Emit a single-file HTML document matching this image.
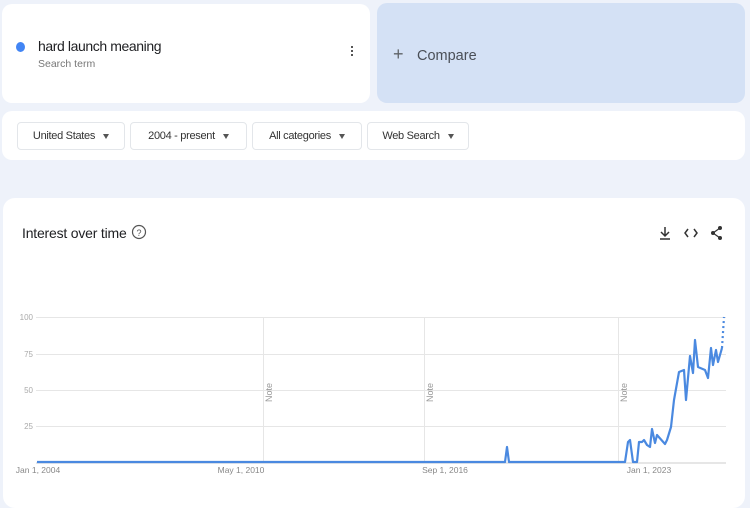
<!DOCTYPE html>
<html><head><style>
body{margin:0;width:750px;height:500px;overflow:hidden;background:#eef2fa;font-family:"Liberation Sans",sans-serif;position:relative}
.card{position:absolute;background:#fff;border-radius:10px}
.dd{position:absolute;top:122px;height:26px;border:1px solid #e3e6ea;border-radius:4px;background:#fff;font-size:11px;color:#333;display:flex;align-items:center;justify-content:center;gap:8px;letter-spacing:-0.3px}
.dd:after{content:"";border-left:3.5px solid transparent;border-right:3.5px solid transparent;border-top:5px solid #555}
</style></head><body>
<div class="card" style="left:2px;top:4px;width:368px;height:99px"></div>
<div style="position:absolute;left:16px;top:42px;width:9px;height:10px;border-radius:50%;background:#4285f4"></div>
<div style="position:absolute;left:38px;top:38px;font-size:14px;color:#202124;letter-spacing:-0.4px">hard launch meaning</div>
<div style="position:absolute;left:38px;top:58px;font-size:10.5px;color:#777">Search term</div>
<div style="position:absolute;left:351px;top:46px;width:2px;height:2px;background:#555;box-shadow:0 4px #555,0 8px #555"></div>
<div class="card" style="left:377px;top:3px;width:368px;height:100px;background:#d4e1f5"></div>
<div style="position:absolute;left:393px;top:44px;font-size:18px;color:#5f6368">+</div>
<div style="position:absolute;left:417px;top:48px;font-size:14.5px;color:#4a4f57">Compare</div>
<div class="card" style="left:2px;top:111px;width:743px;height:49px"></div>
<div class="dd" style="left:17px;width:106px">United States</div>
<div class="dd" style="left:130px;width:115px">2004 - present</div>
<div class="dd" style="left:252px;width:108px">All categories</div>
<div class="dd" style="left:367px;width:100px">Web Search</div>
<div class="card" style="left:3px;top:198px;width:742px;height:310px;border-radius:12px"></div>
<div style="position:absolute;left:22px;top:225px;font-size:14px;color:#202124;letter-spacing:-0.2px">Interest over time</div>
<svg width="750" height="500" style="position:absolute;left:0;top:0">
<circle cx="139" cy="232" r="6.5" fill="none" stroke="#555" stroke-width="1.2"/>
<text x="139" y="236" font-size="9" text-anchor="middle" fill="#555" font-family="Liberation Sans">?</text>
<path d="M665 227v9M661 232l4 4 4-4M660 239h10" fill="none" stroke="#333" stroke-width="1.5"/>
<path d="M688 229l-3 4 3 4M694 229l3 4-3 4" fill="none" stroke="#333" stroke-width="1.5"/>
<circle cx="720" cy="228" r="2" fill="#333"/><circle cx="713" cy="233" r="2" fill="#333"/><circle cx="720" cy="238" r="2" fill="#333"/>
<path d="M720 228l-7 5 7 5" fill="none" stroke="#333" stroke-width="1.2"/>
<g stroke="#e6e6e6" stroke-width="1">
<line x1="36" y1="317.5" x2="726" y2="317.5"/><line x1="36" y1="354.5" x2="726" y2="354.5"/>
<line x1="36" y1="390.5" x2="726" y2="390.5"/><line x1="36" y1="426.5" x2="726" y2="426.5"/>
<line x1="263.5" y1="317" x2="263.5" y2="462"/><line x1="424.5" y1="317" x2="424.5" y2="462"/><line x1="618.5" y1="317" x2="618.5" y2="462"/>
</g>
<line x1="36" y1="463" x2="726" y2="463" stroke="#ccc"/>
<g font-size="8" fill="#aaa" font-family="Liberation Sans" text-anchor="end">
<text x="33" y="320">100</text><text x="33" y="357">75</text><text x="33" y="393">50</text><text x="33" y="429">25</text></g>
<g font-size="8.5" fill="#888" font-family="Liberation Sans" text-anchor="middle">
<text x="38" y="473">Jan 1, 2004</text><text x="241" y="473">May 1, 2010</text><text x="445" y="473">Sep 1, 2016</text><text x="649" y="473">Jan 1, 2023</text></g>
<g font-size="9" fill="#999" font-family="Liberation Sans">
<text transform="translate(272,402) rotate(-90)">Note</text><text transform="translate(433,402) rotate(-90)">Note</text><text transform="translate(627,402) rotate(-90)">Note</text></g>
<polyline fill="none" stroke="#4a89e0" stroke-width="2.2" stroke-linejoin="round" points="37,462 505,462 507,447 509,462 625,462 628,442 630,440 633,462 637,462 639,442 642,442 644,440 647,445 650,447 652,429 655,443 657,435 665,444 667,440 671,427 674,400 679,372 684,370 686,400 690,356 693,373 695,340 698,367 705,370 708,378 711,348 713,365 716,350 718,362 722,348"/>
<path d="M722 348L724 317" stroke="#4a89e0" stroke-width="2.2" stroke-dasharray="2 3"/>
</svg>
</body></html>
